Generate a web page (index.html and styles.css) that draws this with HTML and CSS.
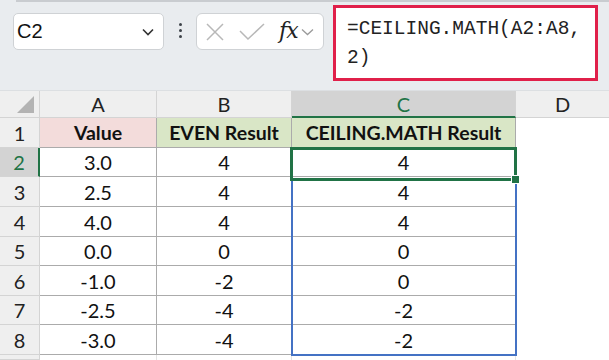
FILE: index.html
```html
<!DOCTYPE html>
<html>
<head>
<meta charset="utf-8">
<link rel="stylesheet" href="styles.css">
</head>
<body>
<div class="toolbar">
  <div class="topline"></div>
  <div class="namebox">
    <span class="name">C2</span>
    <svg class="chev" width="14" height="10" viewBox="0 0 14 10"><path d="M2 2.5 L7 7.5 L12 2.5" fill="none" stroke="#333" stroke-width="1.6"/></svg>
  </div>
  <div class="dots"><span></span><span></span><span></span></div>
  <div class="fxbox">
    <svg width="18" height="18" viewBox="0 0 18 18" class="x"><path d="M1 1 L17 17 M17 1 L1 17" stroke="#b8b8b8" stroke-width="1.5" fill="none"/></svg>
    <svg width="26" height="18" viewBox="0 0 26 18" class="ok"><path d="M1 8 L9 16 L25 1" stroke="#b8b8b8" stroke-width="1.5" fill="none"/></svg>
    <span class="fx">fx</span>
    <svg class="chev2" width="13" height="8" viewBox="0 0 13 8"><path d="M1 1.5 L6.5 6.5 L12 1.5" fill="none" stroke="#9a9a9a" stroke-width="1.3"/></svg>
  </div>
  <div class="formula">=CEILING.MATH(A2:A8,<br>2)</div>
</div>
<div class="sheet">
  <div class="corner"><div class="tri"></div></div>
  <div class="colh">A</div>
  <div class="colh">B</div>
  <div class="colh sel">C</div>
  <div class="colh last">D</div>

  <div class="rowh">1</div>
  <div class="cell hdr pink">Value</div>
  <div class="cell hdr green">EVEN Result</div>
  <div class="cell hdr green">CEILING.MATH Result</div>
  <div class="empty"></div>

  <div class="rowh sel">2</div>
  <div class="cell">3.0</div><div class="cell">4</div><div class="cell">4</div><div class="empty"></div>
  <div class="rowh">3</div>
  <div class="cell">2.5</div><div class="cell">4</div><div class="cell">4</div><div class="empty"></div>
  <div class="rowh">4</div>
  <div class="cell">4.0</div><div class="cell">4</div><div class="cell">4</div><div class="empty"></div>
  <div class="rowh">5</div>
  <div class="cell">0.0</div><div class="cell">0</div><div class="cell">0</div><div class="empty"></div>
  <div class="rowh">6</div>
  <div class="cell">-1.0</div><div class="cell">-2</div><div class="cell">0</div><div class="empty"></div>
  <div class="rowh">7</div>
  <div class="cell">-2.5</div><div class="cell">-4</div><div class="cell">-2</div><div class="empty"></div>
  <div class="rowh">8</div>
  <div class="cell">-3.0</div><div class="cell">-4</div><div class="cell">-2</div><div class="empty"></div>
  <div class="rowh"></div>
  <div class="blank"></div><div class="blank"></div><div class="blank"></div><div class="empty"></div>

  <div class="range"></div>
  <div class="active"></div>
  <div class="handle"></div>
</div>
</body>
</html>
```
FILE: styles.css
```css
* { box-sizing: border-box; }
body {
  margin: 0;
  width: 609px;
  height: 360px;
  overflow: hidden;
  background: #ffffff;
  font-family: Lato, "Open Sans", sans-serif;
}
.toolbar {
  position: relative;
  height: 91px;
  background: #e9ecef;
  display: flex;
  align-items: flex-start;
  padding-left: 13px;
  border-bottom: 1px solid #dcdfe2;
}
.topline {
  position: absolute;
  left: 16px;
  right: 0;
  top: 0;
  height: 2px;
  background: #c9ccd0;
}
.namebox {
  margin-top: 13px;
  width: 151px;
  height: 37px;
  background: #fff;
  border: 1px solid #cfd2d5;
  border-radius: 5px;
  display: flex;
  align-items: center;
  justify-content: space-between;
  padding: 0 8px 0 3px;
}
.name {
  font-family: "Liberation Sans", Arial, sans-serif;
  font-size: 20px;
  color: #111;
}
.dots {
  margin-top: 23px;
  width: 32px;
  display: flex;
  flex-direction: column;
  align-items: center;
  gap: 3px;
}
.dots span {
  width: 3px;
  height: 3px;
  border-radius: 50%;
  background: #3d4248;
}
.fxbox {
  margin-top: 13px;
  width: 128px;
  height: 37px;
  background: #fff;
  border: 1px solid #cfd2d5;
  border-radius: 6px;
  display: flex;
  align-items: center;
  padding-left: 9px;
}
.fxbox .x { margin-right: 15px; }
.fxbox .ok { margin-right: 14px; }
.fx {
  font-family: "DejaVu Serif", "Liberation Serif", serif;
  font-style: italic;
  font-size: 22px;
  color: #222;
  margin-right: 3px;
  letter-spacing: -1px;
  line-height: 1;
  margin-top: -2px;
}
.formula {
  margin-top: 5px;
  margin-left: 9px;
  width: 265px;
  height: 76px;
  background: #fff;
  border: 3px solid #e0204a;
  font-family: "Liberation Mono", "DejaVu Sans Mono", monospace;
  font-size: 19.5px;
  line-height: 29px;
  color: #222;
  padding: 7px 0 0 11px;
}
.sheet {
  position: relative;
  display: grid;
  grid-template-columns: 40px 117px 135px 224px 93px;
  grid-template-rows: 27px 30px 29px 30px 30px 29px 30px 29px 30px 5px;
}
.corner {
  background: #efefef;
  border-right: 1px solid #d4d4d4;
  border-bottom: 1px solid #d4d4d4;
  position: relative;
}
.tri {
  position: absolute;
  right: 5px;
  bottom: 4px;
  width: 0;
  height: 0;
  border-left: 17px solid transparent;
  border-bottom: 17px solid #b3b3b3;
}
.colh {
  background: #efefef;
  border-right: 1px solid #d4d4d4;
  border-bottom: 1px solid #d4d4d4;
  display: flex;
  align-items: center;
  justify-content: center;
  font-size: 20px;
  color: #222;
}
.colh.sel {
  background: #d3d3d3;
  color: #217346;
  border-bottom: 2px solid #217346;
}
.colh.last { border-right: none; }
.rowh {
  background: #efefef;
  border-right: 1px solid #d4d4d4;
  border-bottom: 1px solid #d4d4d4;
  display: flex;
  align-items: center;
  justify-content: center;
  font-size: 20px;
  color: #222;
}
.rowh.sel {
  background: #d3d3d3;
  color: #217346;
  border-right: 2px solid #217346;
}
.cell {
  border-right: 1px solid #ababab;
  border-bottom: 1px solid #ababab;
  display: flex;
  align-items: center;
  justify-content: center;
  font-size: 20px;
  color: #111;
}
.cell.hdr { font-weight: bold; font-size: 19.5px; }
.pink { background: #f3dcdb; }
.green { background: #d9e6c6; }
.blank { border-right: 1px solid #e4e4e4; }
.empty { background: #fff; }
.range {
  position: absolute;
  left: 291px;
  top: 57px;
  width: 226px;
  height: 208px;
  border: 2px solid #4472c4;
}
.active {
  position: absolute;
  left: 290px;
  top: 56px;
  width: 227px;
  height: 34px;
  border: 3px solid #217346;
}
.handle {
  position: absolute;
  left: 511px;
  top: 84px;
  width: 9px;
  height: 9px;
  background: #217346;
  border: 1px solid #fff;
}
```
